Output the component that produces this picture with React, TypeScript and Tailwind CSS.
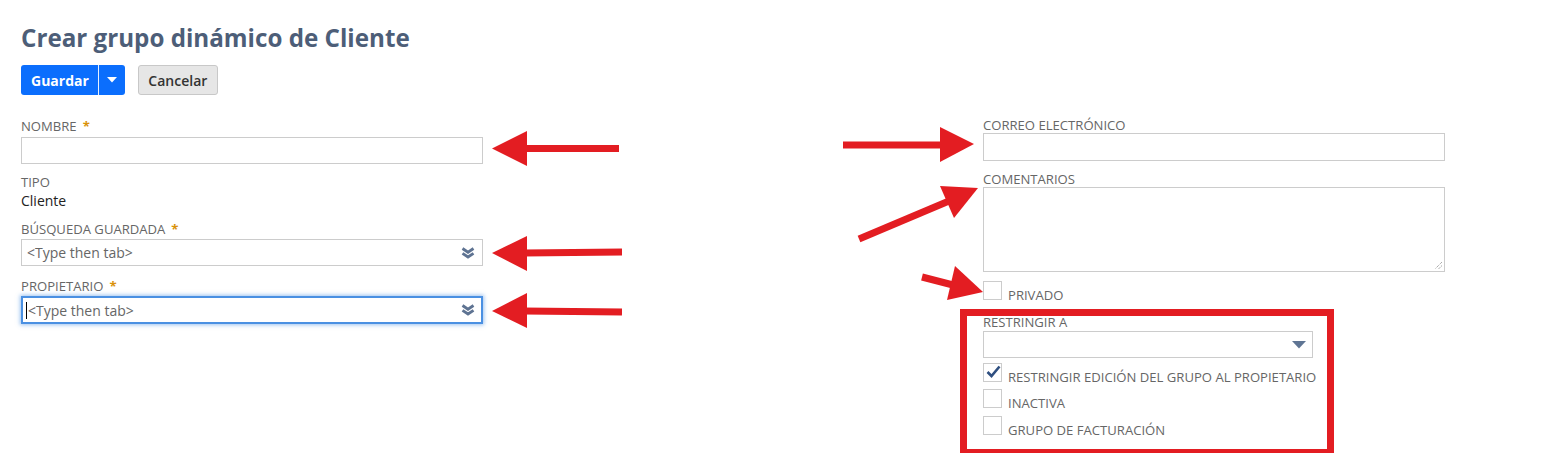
import React from 'react';

// Doble chevrón de los campos de búsqueda
const DoubleChevron = () => (
  <svg width="14" height="12" viewBox="0 0 14 12" className="shrink-0">
    <path d="M1.5 1.5 L7 5.2 L12.5 1.5" fill="none" stroke="#5e7392" strokeWidth="2.8" strokeLinejoin="miter" />
    <path d="M1.5 6.3 L7 10 L12.5 6.3" fill="none" stroke="#5e7392" strokeWidth="2.8" strokeLinejoin="miter" />
  </svg>
);

const Label = ({ text, required, className = '' }: { text: string; required?: boolean; className?: string }) => (
  <div className={`text-[13.1px] leading-[16px] text-[#666] uppercase ${className}`}>
    {text}
    {required && <span className="ml-[6px] font-bold text-[#d9920b]">*</span>}
  </div>
);

const Checkbox = ({ checked, label, className = '' }: { checked?: boolean; label: string; className?: string }) => (
  <div className={`flex items-start ${className}`}>
    <div className="w-[19px] h-[19px] border border-[#ccc] bg-white relative shrink-0">
      {checked && (
        <svg width="15" height="13" viewBox="0 0 15 13" className="absolute left-[2px] top-[1px]">
          <path d="M1.5 7 L5.5 11 L13.5 1.5" fill="none" stroke="#2f4f80" strokeWidth="2.6" />
        </svg>
      )}
    </div>
    <span className="ml-[6px] mt-[6px] text-[13.1px] leading-[16px] text-[#666] uppercase">{label}</span>
  </div>
);

const Annotations = () => (
  <svg className="absolute left-0 top-0 pointer-events-none" width="1546" height="453" viewBox="0 0 1546 453">
    <g fill="#e31d22" stroke="#e31d22">
      {/* flechas hacia la izquierda */}
      <line x1="524" y1="148.5" x2="619" y2="148.5" strokeWidth="7" />
      <polygon points="492,148.5 527,131 527,166" stroke="none" />
      <line x1="524" y1="253" x2="622" y2="252" strokeWidth="7" />
      <polygon points="492,253 527,236 527,271" stroke="none" />
      <line x1="524" y1="311" x2="622" y2="312" strokeWidth="7" />
      <polygon points="492,311 527,293 527,328" stroke="none" />
      {/* flecha hacia la derecha */}
      <line x1="843" y1="145" x2="944" y2="145" strokeWidth="7" />
      <polygon points="974,144 940,127 940,162" stroke="none" />
      {/* diagonales */}
      <line x1="859" y1="239" x2="949" y2="201" strokeWidth="7" />
      <polygon points="978,188 940,186 954,218" stroke="none" />
      <line x1="922" y1="277" x2="953" y2="285" strokeWidth="7" />
      <polygon points="983,292 955,266 947,300" stroke="none" />
      {/* recuadro */}
      <rect x="963.5" y="312.5" width="367" height="140" fill="none" strokeWidth="7" />
    </g>
  </svg>
);

export default function App() {
  return (
    <div className="relative w-[1546px] h-[453px] bg-white overflow-hidden font-['Open_Sans',sans-serif]">
      <div className="pl-[21px] pt-[22px]">
        <h1 className="text-[24.2px] leading-[32px] font-bold text-[#4d5e78]">Crear grupo dinámico de Cliente</h1>

        <div className="flex items-center mt-[11px] h-[30px]">
          <div className="flex h-[30px] rounded-[3px] bg-[#0b6efd] text-white">
            <div className="pl-[10px] pr-[9px] flex items-center text-[14px] font-bold">Guardar</div>
            <div className="w-px bg-white/90" />
            <div className="w-[26px] flex items-center justify-center">
              <svg width="10" height="6" viewBox="0 0 10 6">
                <path d="M0 0 L10 0 L5 5.5 Z" fill="white" />
              </svg>
            </div>
          </div>
          <div className="ml-[13px] h-[30px] w-[80px] flex items-center justify-center rounded-[3px] border border-[#c8c8c8] bg-[#e6e6e6] text-[14px] font-semibold text-[#333]">
            Cancelar
          </div>
        </div>

        <div className="flex mt-[23px]">
          {/* columna izquierda */}
          <div className="w-[462px]">
            <Label text="Nombre" required />
            <div className="mt-[3px] h-[27px] border border-[#ccc] bg-white" />

            <Label text="Tipo" className="mt-[10px]" />
            <div className="text-[14px] leading-[20px] text-[#222] mt-px">Cliente</div>

            <Label text="Búsqueda guardada" required className="mt-[10px]" />
            <div className="mt-[2px] h-[27px] border border-[#ccc] bg-white flex items-center pl-[5px] pr-[7px]">
              <span className="flex-1 text-[14px] text-[#666]">&lt;Type then tab&gt;</span>
              <DoubleChevron />
            </div>

            <Label text="Propietario" required className="mt-[12px]" />
            <div className="mt-[2px] h-[28px] border-2 border-[#4a90e2] shadow-[0_0_4px_1px_rgba(74,144,226,0.55)] bg-white flex items-center pl-[3px] pr-[6px]">
              <span className="w-px h-[17px] bg-black mr-px" />
              <span className="flex-1 text-[14px] text-[#666]">&lt;Type then tab&gt;</span>
              <DoubleChevron />
            </div>
          </div>

          {/* columna derecha */}
          <div className="ml-[500px] w-[462px] -mt-[1px]">
            <Label text="Correo electrónico" />
            <div className="h-[28px] border border-[#ccc] bg-white" />

            <Label text="Comentarios" className="mt-[10px]" />
            <div className="h-[85px] border border-[#ccc] bg-white relative">
              <svg width="9" height="9" viewBox="0 0 9 9" className="absolute right-[1px] bottom-[1px]">
                <path d="M8 1 L1 8 M8 4.5 L4.5 8" stroke="#888" strokeWidth="1" strokeDasharray="1 1" />
              </svg>
            </div>

            <Checkbox label="Privado" className="mt-[9px]" />

            <Label text="Restringir a" className="mt-[11px]" />
            <div className="mt-px w-[330px] h-[27px] border border-[#ccc] bg-white flex items-center justify-end pr-[6px]">
              <svg width="14" height="8" viewBox="0 0 14 8">
                <path d="M0 0 L14 0 L7 7.5 Z" fill="#5f7594" />
              </svg>
            </div>

            <Checkbox checked label="Restringir edición del grupo al propietario" className="mt-[5px]" />
            <Checkbox label="Inactiva" className="mt-[4px]" />
            <Checkbox label="Grupo de facturación" className="mt-[5px]" />
          </div>
        </div>
      </div>
      <Annotations />
    </div>
  );
}
